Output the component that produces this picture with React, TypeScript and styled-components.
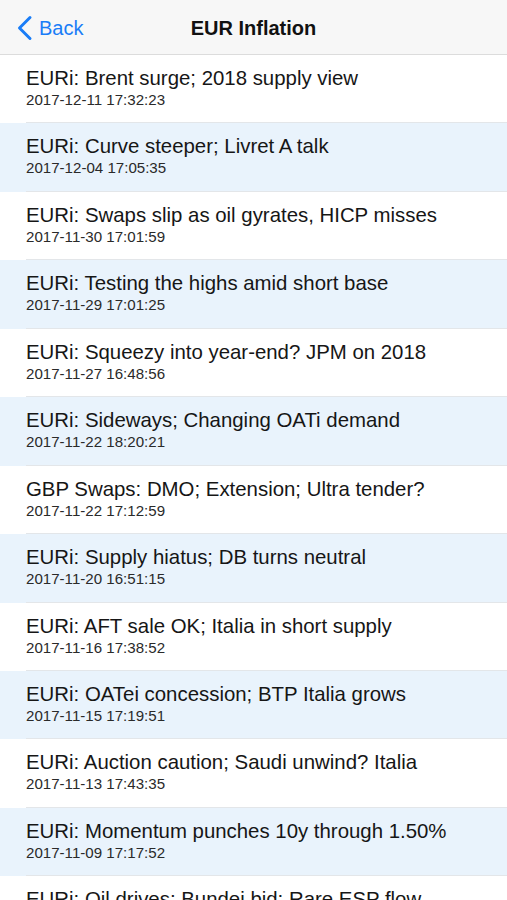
import styled, { createGlobalStyle } from "styled-components"

const GlobalStyle = createGlobalStyle`
  html, body {
    margin: 0;
    padding: 0;
    background: #ffffff;
    font-family: "Liberation Sans", Arial, sans-serif;
    -webkit-font-smoothing: antialiased;
  }
`

const Screen = styled.div`
  width: 507px;
  height: 900px;
  overflow: hidden;
  background: #ffffff;
`

const NavBar = styled.header`
  height: 55px;
  box-sizing: border-box;
  padding-top: 2px;
  background: #f7f7f7;
  border-bottom: 1px solid #dcdcdc;
  display: grid;
  grid-template-columns: 1fr auto 1fr;
  align-items: center;
`

const BackButton = styled.div`
  display: flex;
  align-items: center;
  gap: 6px;
  padding-left: 16px;
  color: #1a7df7;
  font-size: 20px;
  line-height: 24px;
`

const NavTitle = styled.h1`
  margin: 0;
  font-size: 20px;
  font-weight: 700;
  color: #111111;
  line-height: 24px;
`

const List = styled.div`
  display: flex;
  flex-direction: column;
`

const Row = styled.div<{ $shaded: boolean }>`
  height: 68.45px;
  flex-shrink: 0;
  background: ${(p) => (p.$shaded ? "#e9f3fc" : "#ffffff")};
  box-sizing: border-box;
`

const RowBody = styled.div`
  margin-left: 26px;
  height: 100%;
  box-sizing: border-box;
  padding-top: 11px;
  border-bottom: 1px solid #e3e6e9;
`

const Title = styled.div`
  font-size: 20.4px;
  line-height: 24px;
  color: #161616;
  white-space: nowrap;
`

const Stamp = styled.div`
  margin-top: 1px;
  font-size: 15.1px;
  line-height: 18px;
  color: #2a2a2a;
`

const items: [string, string][] = [
  ["EURi: Brent surge; 2018 supply view", "2017-12-11 17:32:23"],
  ["EURi: Curve steeper; Livret A talk", "2017-12-04 17:05:35"],
  ["EURi: Swaps slip as oil gyrates, HICP misses", "2017-11-30 17:01:59"],
  ["EURi: Testing the highs amid short base", "2017-11-29 17:01:25"],
  ["EURi: Squeezy into year-end? JPM on 2018", "2017-11-27 16:48:56"],
  ["EURi: Sideways; Changing OATi demand", "2017-11-22 18:20:21"],
  ["GBP Swaps: DMO; Extension; Ultra tender?", "2017-11-22 17:12:59"],
  ["EURi: Supply hiatus; DB turns neutral", "2017-11-20 16:51:15"],
  ["EURi: AFT sale OK; Italia in short supply", "2017-11-16 17:38:52"],
  ["EURi: OATei concession; BTP Italia grows", "2017-11-15 17:19:51"],
  ["EURi: Auction caution; Saudi unwind? Italia", "2017-11-13 17:43:35"],
  ["EURi: Momentum punches 10y through 1.50%", "2017-11-09 17:17:52"],
  ["EURi: Oil drives; Bundei bid; Rare ESP flow", "2017-11-07 17:10:04"],
]

const Chevron = () => (
  <svg width="17" height="26" viewBox="0 0 17 26">
    <path
      d="M14 2.5 L3.5 13 L14 23.5"
      fill="none"
      stroke="#1a7df7"
      strokeWidth="3"
      strokeLinecap="round"
      strokeLinejoin="round"
    />
  </svg>
)

const App = () => {
  return (
    <Screen>
      <GlobalStyle />
      <NavBar>
        <BackButton>
          <Chevron />
          <span>Back</span>
        </BackButton>
        <NavTitle>EUR Inflation</NavTitle>
        <div />
      </NavBar>
      <List>
        {items.map(([title, date], i) => (
          <Row key={date + i} $shaded={i % 2 === 1}>
            <RowBody>
              <Title>{title}</Title>
              <Stamp>{date}</Stamp>
            </RowBody>
          </Row>
        ))}
      </List>
    </Screen>
  )
}

export default App
